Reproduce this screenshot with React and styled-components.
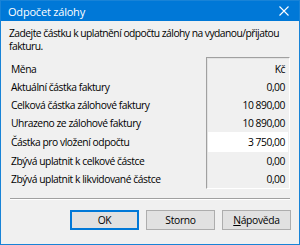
import React from 'react';
import styled, { createGlobalStyle } from 'styled-components';

const GlobalStyle = createGlobalStyle`
  html, body {
    margin: 0;
    padding: 0;
    background: #ffffff;
  }
  body {
    font-family: "Open Sans", "Noto Sans", sans-serif;
    font-size: 10.3px;
    letter-spacing: -0.45px;
    color: #000000;
  }
`;

const Window = styled.div`
  box-sizing: border-box;
  width: 300px;
  height: 245px;
  border: 1px solid #1883d7;
  background: #f0f0f0;
  display: flex;
  flex-direction: column;
`;

const TitleBar = styled.div`
  height: 20px;
  background: #0078d7;
  color: #ffffff;
  display: flex;
  align-items: center;
  justify-content: space-between;
  padding: 0 10px 0 7px;
  font-size: 11px;
  letter-spacing: -0.2px;
`;

const Body = styled.div`
  flex: 1;
  display: flex;
  flex-direction: column;
  padding: 6px 8px 0 8px;
`;

const Intro = styled.p`
  margin: 0;
  line-height: 13px;
  letter-spacing: -0.52px;
`;

const IntroLine = styled.span`
  display: block;
  white-space: nowrap;
`;

const Panel = styled.div`
  display: flex;
  margin-top: 4px;
`;

const Labels = styled.div`
  flex: 1;
  padding: 3px 0 0 2px;
`;

const ValueBox = styled.div`
  width: 80px;
  border: 1px solid #a0a0a0;
  border-right-color: #ffffff;
  border-bottom-color: #ffffff;
  box-shadow: inset 1px 1px 0 #e3e3e3;
  padding: 2px 1px 0 1px;
  margin-right: 1px;
`;

const Row = styled.div`
  height: ${p => (p.$input ? 20 : 18)}px;
  line-height: ${p => (p.$input ? 20 : 18)}px;
  white-space: nowrap;
`;

const Value = styled(Row)`
  text-align: right;
  padding-right: 3px;
  background: ${p => (p.$input ? '#ffffff' : 'transparent')};
`;

const Separator = styled.div`
  margin: 9px 1px 0 1px;
  border-top: 1px solid #a0a0a0;
  border-bottom: 1px solid #ffffff;
`;

const Buttons = styled.div`
  display: flex;
  justify-content: flex-end;
  gap: 7px;
  margin-top: 10px;
`;

const Button = styled.button`
  box-sizing: border-box;
  flex: none;
  width: 69px;
  height: 20px;
  padding: 0;
  font: inherit;
  letter-spacing: -0.3px;
  color: #000000;
  background: #e1e1e1;
  border: ${p => (p.$default ? '2px solid #0078d7' : '1px solid #adadad')};
`;

const rows = [
  ['Měna', 'Kč'],
  ['Aktuální částka faktury', '0,00'],
  ['Celková částka zálohové faktury', '10 890,00'],
  ['Uhrazeno ze zálohové faktury', '10 890,00'],
  ['Částka pro vložení odpočtu', '3 750,00', true],
  ['Zbývá uplatnit k celkové částce', '0,00'],
  ['Zbývá uplatnit k likvidované částce', '0,00'],
];

export default function App() {
  return (
    <>
      <GlobalStyle />
      <Window>
        <TitleBar>
          <span>Odpočet zálohy</span>
          <svg width="10" height="10" viewBox="0 0 10 10">
            <path d="M0.5 0.5 L9.5 9.5 M9.5 0.5 L0.5 9.5" stroke="#ffffff" strokeWidth="1.1" />
          </svg>
        </TitleBar>
        <Body>
          <Intro>
            <IntroLine>Zadejte částku k uplatnění odpočtu zálohy na vydanou/přijatou</IntroLine>
            <IntroLine>fakturu.</IntroLine>
          </Intro>
          <Panel>
            <Labels>
              {rows.map(([label, , input]) => (
                <Row key={label} $input={input}>{label}</Row>
              ))}
            </Labels>
            <ValueBox>
              {rows.map(([label, value, input]) => (
                <Value key={label} $input={input}>{value}</Value>
              ))}
            </ValueBox>
          </Panel>
          <Separator />
          <Buttons>
            <Button $default>OK</Button>
            <Button>Storno</Button>
            <Button><u>N</u>ápověda</Button>
          </Buttons>
        </Body>
      </Window>
    </>
  );
}
